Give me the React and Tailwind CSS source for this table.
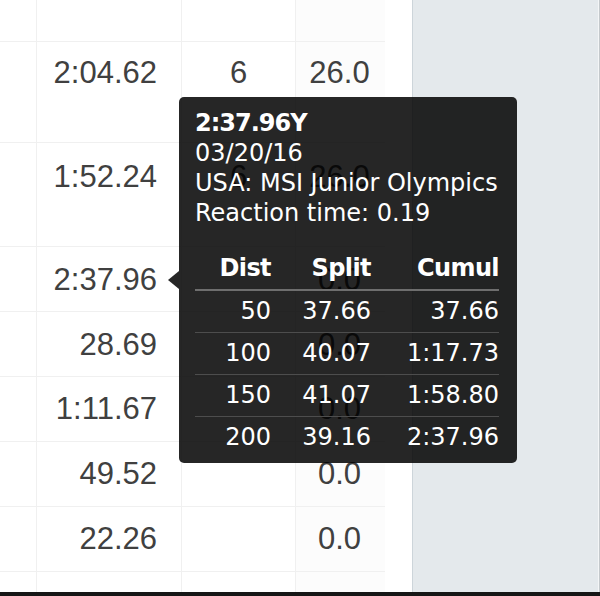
import React from "react";

const rows = [
  { h: 42, pt: 15, a: "", b: "", c: "" },
  { h: 101, pt: 14, a: "2:04.62", b: "6", c: "26.0" },
  { h: 104, pt: 17, a: "1:52.24", b: "6", c: "26.0" },
  { h: 65, pt: 16, a: "2:37.96", b: "", c: "0.0" },
  { h: 65, pt: 16, a: "28.69", b: "", c: "0.0" },
  { h: 65, pt: 15, a: "1:11.67", b: "", c: "0.0" },
  { h: 65, pt: 15, a: "49.52", b: "", c: "0.0" },
  { h: 65, pt: 15, a: "22.26", b: "", c: "0.0" },
  { h: 65, pt: 15, a: "26.36", b: "4", c: "10.0" },
];

const splits = [
  ["50", "37.66", "37.66"],
  ["100", "40.07", "1:17.73"],
  ["150", "41.07", "1:58.80"],
  ["200", "39.16", "2:37.96"],
];

export default function App() {
  return (
    <div className="relative w-[600px] h-[596px] overflow-hidden bg-white flex flex-col">
      <div className="flex h-[592px] overflow-hidden">
        <div className="w-[385px] flex flex-col text-[#404040] text-[31px] leading-[34px] [font-family:'Liberation_Sans',Arial,sans-serif]">
          {rows.map((r, i) => (
            <div
              key={i}
              className="flex shrink-0 border-b border-[#f0f0f0]"
              style={{ height: r.h }}
            >
              <div className="w-[37px] border-r border-[#f0f0f0]" />
              <div
                className="w-[145px] border-r border-[#f0f0f0] text-right pr-[24px]"
                style={{ paddingTop: r.pt }}
              >
                {r.a}
              </div>
              <div
                className="w-[114px] border-r border-[#f0f0f0] text-center"
                style={{ paddingTop: r.pt }}
              >
                {r.b}
              </div>
              <div
                className="w-[89px] bg-[#fcfcfc] text-center pr-[2px]"
                style={{ paddingTop: r.pt }}
              >
                {r.c}
              </div>
            </div>
          ))}
        </div>
        <div className="w-[27px] bg-white" />
        <div className="w-[186px] bg-[#e4e9ec] border-l border-[#cdd5da]" />
        <div className="w-[1px] bg-[#f4f6f7]" />
        <div className="w-[1px] bg-[#c4c9cc]" />
      </div>
      <div className="h-[4px] bg-[#161616]" />

      <div className="absolute left-[179px] top-[97px] w-[338px] rounded-[5px] bg-black/85 text-white pt-[11px] px-[16px] pb-[5px] text-[24px] [font-family:'DejaVu_Sans',Verdana,sans-serif]">
        <div className="absolute left-[-11px] top-[174px] w-0 h-0 border-y-[9px] border-y-transparent border-r-[11px] border-r-black/85" />
        <div className="leading-[30px] font-bold tracking-[-1px]">2:37.96Y</div>
        <div className="leading-[30px]">03/20/16</div>
        <div className="leading-[30px] whitespace-nowrap">USA: MSI Junior Olympics</div>
        <div className="leading-[30px]">Reaction time: 0.19</div>
        <div className="mt-[20px] w-[304px]">
          <div className="grid grid-cols-[76px_100px_128px] h-[43px] border-b-2 border-[#6e6e6e] font-bold leading-[41px] tracking-[-0.6px]">
            <div className="text-right">Dist</div>
            <div className="text-right">Split</div>
            <div className="text-right">Cumul</div>
          </div>
          {splits.map((s, i) => (
            <div
              key={i}
              className={
                "grid grid-cols-[76px_100px_128px] leading-[41px] " +
                (i < splits.length - 1 ? "h-[42px] border-b border-[#4d4d4d]" : "h-[41px]")
              }
            >
              <div className="text-right">{s[0]}</div>
              <div className="text-right">{s[1]}</div>
              <div className="text-right">{s[2]}</div>
            </div>
          ))}
        </div>
      </div>
    </div>
  );
}
